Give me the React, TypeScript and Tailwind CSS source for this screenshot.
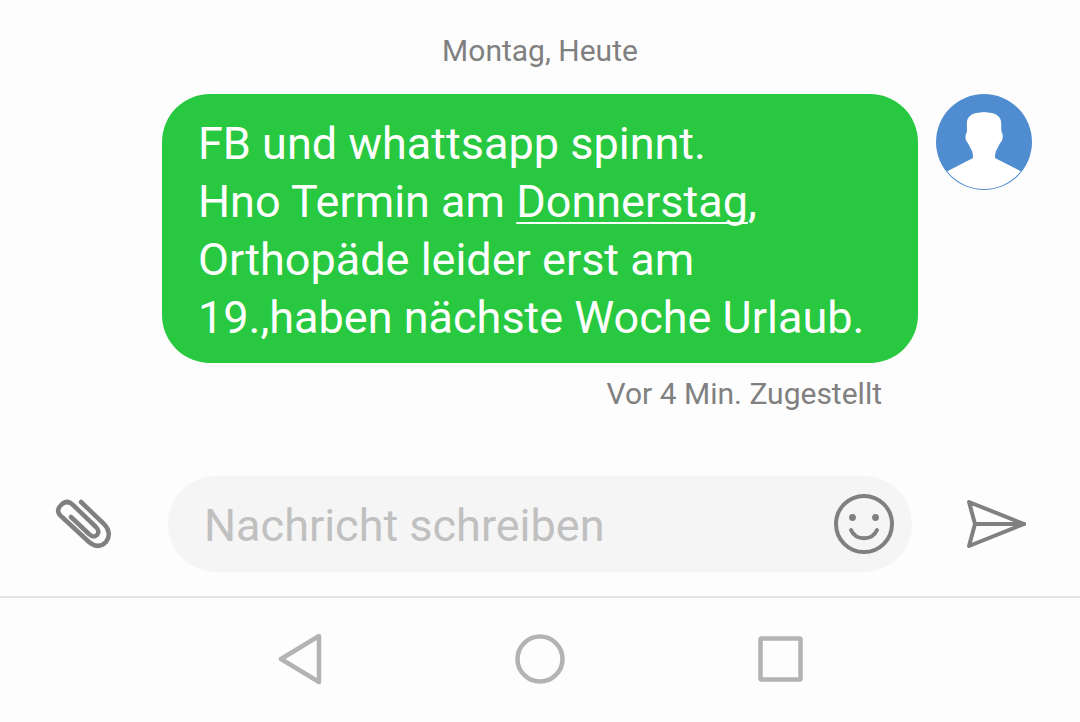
import React from "react";

function Avatar() {
  return (
    <svg viewBox="0 0 96 96" className="w-24 h-24 shrink-0">
      <circle cx="48" cy="48" r="48" fill="#508dd0" />
      <clipPath id="avatar-clip">
        <circle cx="48" cy="48" r="47" />
      </clipPath>
      <path
        clipPath="url(#avatar-clip)"
        d="M31 38 C31 31 30 26 33 23 C37 18 43 19 48 18 C53 19 59 18 63 23 C66 26 65 31 65.5 38 C67.5 40 67 46 65 48 C63 50 62 54 60 57 C59 60 59 62 59 64 L90 80 L90 96 L6 96 L6 80 L37 64 C37 62 37 60 36 57 C34 54 33 50 31 48 C29 46 29 40 31 38 Z"
        fill="#ffffff"
      />
    </svg>
  );
}

function Paperclip() {
  return (
    <svg viewBox="0 0 60 52" className="w-[60px] h-[52px]" fill="none" stroke="#808080" strokeWidth="4.5" strokeLinecap="round" strokeLinejoin="round">
      <path d="M27 4 L50 26 C56 32 56 39 52 44 C47 49 41 49 35 44 L8 19 C3 15 3 11 7 7 C11 3 15 3 19 7 L42 29 C45 32 45 35 43 37 C41 39 38 39 35 36 L17 19" />
    </svg>
  );
}

function Smiley() {
  return (
    <svg viewBox="0 0 60 60" className="w-[60px] h-[60px]" fill="none" stroke="#808080">
      <circle cx="30" cy="30" r="28" strokeWidth="4" />
      <circle cx="18.5" cy="23.5" r="3.4" fill="#808080" stroke="none" />
      <circle cx="41.5" cy="23.5" r="3.4" fill="#808080" stroke="none" />
      <path d="M17 36 C22 47 38 47 43 36" strokeWidth="4" strokeLinecap="round" />
    </svg>
  );
}

function SendIcon() {
  return (
    <svg viewBox="0 0 62 50" className="w-[62px] h-[50px]" fill="none" stroke="#808080" strokeWidth="4" strokeLinejoin="round" strokeLinecap="round">
      <path d="M4 3 L59 25 L4 47 L10 25 Z" />
      <path d="M10 25 L59 25" />
    </svg>
  );
}

export default function App() {
  return (
    <div className="w-[1080px] h-[722px] bg-[#fdfdfd] overflow-hidden font-['Roboto',sans-serif] flex flex-col">
      <div className="pt-[33px] text-center text-[30px] leading-[36px] text-[#808080]">Montag, Heute</div>

      <div className="mt-[25px] flex items-start pl-[162px] gap-[18px]">
        <div className="w-[756px] h-[269px] bg-[#28c940] rounded-[48px] pl-[36px] pt-[21px] text-[45px] leading-[58px] text-white">
          <div>FB und whattsapp spinnt.</div>
          <div>
            Hno Termin am <span className="underline decoration-2 underline-offset-[5px] [text-decoration-skip-ink:none]">Donnerstag</span>,
          </div>
          <div>Orthopäde leider erst am</div>
          <div>19.,haben nächste Woche Urlaub.</div>
        </div>
        <Avatar />
      </div>

      <div className="mt-[13px] pr-[198px] text-right text-[30px] leading-[36px] text-[#808080]">Vor 4 Min. Zugestellt</div>

      <div className="mt-[64px] flex items-center">
        <div className="w-[168px] flex justify-center">
          <Paperclip />
        </div>
        <div className="w-[744px] h-[96px] rounded-[48px] bg-[#f5f5f5] flex items-center justify-between pl-[36px] pr-[18px]">
          <span className="mt-[4px] text-[45px] text-[#c0c0c0]">Nachricht schreiben</span>
          <Smiley />
        </div>
        <div className="flex-1 flex justify-center pr-[1px]">
          <SendIcon />
        </div>
      </div>

      <div className="mt-[24px] h-[2px] bg-[#e3e3e3]" />

      <div className="flex-1 flex items-center justify-center gap-[193px] pb-[3px]">
        <svg viewBox="0 0 44 52" className="w-[44px] h-[52px]" fill="none" stroke="#b3b3b3" strokeWidth="4.5" strokeLinejoin="round">
          <path d="M41 3 L3 26 L41 49 Z" />
        </svg>
        <svg viewBox="0 0 50 50" className="w-[50px] h-[50px]" fill="none" stroke="#b3b3b3" strokeWidth="4.5">
          <circle cx="25" cy="25" r="22.5" />
        </svg>
        <svg viewBox="0 0 45 46" className="w-[45px] h-[46px]" fill="none" stroke="#b3b3b3" strokeWidth="4.5" strokeLinejoin="round">
          <rect x="2.5" y="2.5" width="40" height="41" rx="1" />
        </svg>
      </div>
    </div>
  );
}
